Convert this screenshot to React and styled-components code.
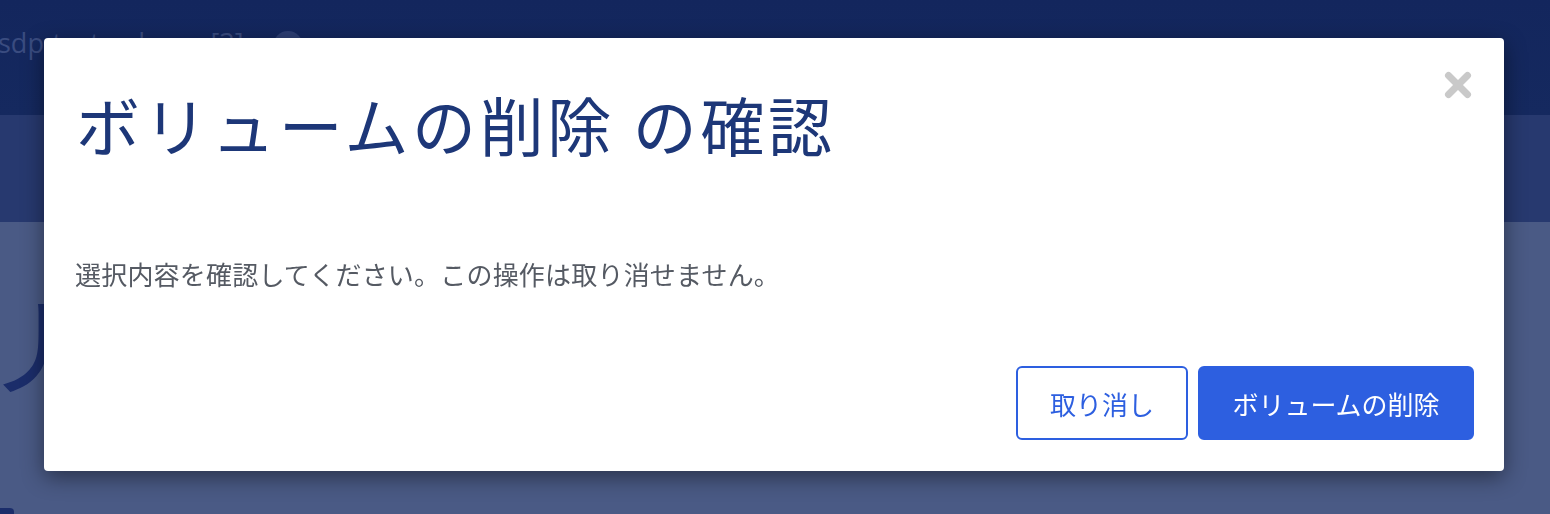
import React from "react";
import styled, { createGlobalStyle } from "styled-components";

const Global = createGlobalStyle`
  html, body { margin: 0; padding: 0; }
  body {
    width: 1550px;
    height: 514px;
    overflow: hidden;
    font-family: "Noto Sans CJK JP", "Noto Sans", sans-serif;
  }
`;

const Page = styled.div`
  width: 1550px;
  height: 514px;
  display: flex;
  flex-direction: column;
  background: #4a5a85;
  overflow: hidden;
`;

const TopBar = styled.header`
  height: 115px;
  flex: none;
  background: linear-gradient(#13265d, #15295f);
  display: flex;
  align-items: flex-start;
  gap: 14px;
  padding: 24px 0 0 0;
  box-sizing: border-box;
  color: #3a4c80;
  font-family: "Open Sans", "Noto Sans", sans-serif;
  font-size: 27px;
`;

const Crumb = styled.span`
  margin-left: -2px;
  white-space: nowrap;
`;

const Dot = styled.span`
  width: 30px;
  height: 30px;
  border-radius: 50%;
  background: #2d3f74;
  margin-top: 7px;
`;

const SubBar = styled.div`
  height: 107px;
  flex: none;
  background: #27396f;
`;

const Content = styled.main`
  flex: 1;
  display: flex;
  flex-direction: column;
  align-items: flex-start;
`;

const BigHeading = styled.h1`
  margin: 52px 0 0 -147px;
  font-size: 110px;
  font-weight: 400;
  line-height: 1.2;
  color: #1b2d6a;
  white-space: nowrap;
`;

const Chip = styled.div`
  width: 14px;
  height: 10px;
  margin-top: 102px;
  flex: none;
  border-radius: 0 4px 0 0;
  background: #1b2d6a;
`;

const Overlay = styled.div`
  position: fixed;
  inset: 0;
  display: flex;
  align-items: flex-start;
  justify-content: flex-start;
  padding: 38px 0 0 44px;
  box-sizing: border-box;
`;

const Modal = styled.div`
  width: 1460px;
  height: 433px;
  background: #fff;
  border-radius: 4px;
  box-shadow: 0 6px 22px rgba(0, 0, 0, 0.45);
  display: flex;
  flex-direction: column;
  box-sizing: border-box;
`;

const ModalHeader = styled.div`
  display: flex;
  align-items: flex-start;
  padding: 33px 32px 0 32px;
`;

const Title = styled.h2`
  flex: 1;
  margin: 15px 0 0 0;
  font-size: 64px;
  font-weight: 400;
  line-height: 74px;
  color: #1d3778;
  letter-spacing: 3.6px;
  white-space: nowrap;
`;

const CloseButton = styled.button`
  border: none;
  background: none;
  padding: 0;
  width: 28px;
  height: 28px;
  cursor: pointer;
  display: flex;
  align-items: center;
  justify-content: center;
`;

const Body = styled.p`
  margin: 94px 0 0 0;
  padding: 0 32px 0 31px;
  font-size: 26px;
  line-height: 39px;
  color: #555a63;
  letter-spacing: 0.2px;
`;

const Footer = styled.div`
  margin-top: auto;
  display: flex;
  justify-content: flex-end;
  gap: 10px;
  padding: 0 30px 31px 0;
`;

const Button = styled.button`
  height: 74px;
  box-sizing: border-box;
  border-radius: 6px;
  border: 2px solid #2d5fe0;
  font-family: "Noto Sans CJK JP", "Noto Sans", sans-serif;
  font-size: 26px;
  padding: 0;
  width: ${(p) => p.$w}px;
  background: ${(p) => (p.$primary ? "#2d5fe0" : "#fff")};
  color: ${(p) => (p.$primary ? "#fff" : "#2d5fe0")};
  cursor: pointer;
`;

function CloseIcon() {
  return (
    <svg width="28" height="28" viewBox="0 0 28 28">
      <g stroke="#c9c9c9" strokeWidth="7" strokeLinecap="round">
        <line x1="4.5" y1="4.5" x2="23.5" y2="23.5" />
        <line x1="23.5" y1="4.5" x2="4.5" y2="23.5" />
      </g>
    </svg>
  );
}

export default function App() {
  return (
    <>
      <Global />
      <Page>
        <TopBar>
          <Crumb>sdp-test-volume-[3]  ›</Crumb>
          <Dot />
        </TopBar>
        <SubBar />
        <Content>
          <BigHeading>ボリューム</BigHeading>
          <Chip />
        </Content>
      </Page>
      <Overlay>
        <Modal role="dialog">
          <ModalHeader>
            <Title>ボリュームの削除 の確認</Title>
            <CloseButton aria-label="閉じる">
              <CloseIcon />
            </CloseButton>
          </ModalHeader>
          <Body>選択内容を確認してください。この操作は取り消せません。</Body>
          <Footer>
            <Button $w={172}>取り消し</Button>
            <Button $w={276} $primary>
              ボリュームの削除
            </Button>
          </Footer>
        </Modal>
      </Overlay>
    </>
  );
}
